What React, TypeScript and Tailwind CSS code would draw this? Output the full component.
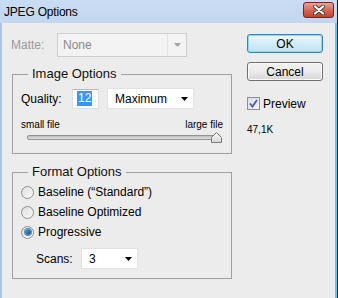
import React from "react";

function Arrow({ color = "#000" }: { color?: string }) {
  return (
    <svg width="7" height="4" viewBox="0 0 7 4">
      <path d="M0 0h7L3.5 4z" fill={color} />
    </svg>
  );
}

function Select({ value, width }: { value: string; width: string }) {
  return (
    <div
      className={`${width} h-[21px] flex items-center justify-between bg-white border border-[#e2e2e2] pl-[7px] pr-[5px] text-[12px] text-black`}
    >
      <span>{value}</span>
      <Arrow />
    </div>
  );
}

function Radio({ checked = false }: { checked?: boolean }) {
  return (
    <div className="w-[13px] h-[13px] rounded-full border border-[#8e8f8f] bg-gradient-to-br from-[#dcdcdc] to-[#fbfbfb] flex items-center justify-center">
      {checked && (
        <div className="w-[6px] h-[6px] rounded-full bg-gradient-to-br from-[#56a4d6] to-[#0c4f86] ring-1 ring-[#5c8fb4]" />
      )}
    </div>
  );
}

function Group({ title, children, className = "" }: { title: string; children: React.ReactNode; className?: string }) {
  return (
    <fieldset className={`w-[220px] border border-[#a0a0a0] pl-2 pr-2 ${className}`}>
      <legend className="ml-[7px] px-[4px] text-[13px] leading-[16px] text-[#111]">{title}</legend>
      {children}
    </fieldset>
  );
}

export default function App() {
  return (
    <div className="w-[338px] h-[298px] flex flex-col bg-[#ececec] border-r border-[#1e1e1e] font-['Liberation_Sans',Arial,sans-serif] overflow-hidden">
      {/* title bar */}
      <div className="h-[23px] flex items-center justify-between pl-[4px] pr-[3px] bg-gradient-to-b from-[#c9dcf2] to-[#c2d6ef]">
        <span className="text-[12px] text-black tracking-[-0.2px]">JPEG Options</span>
        <div className="w-[31px] h-[16px] mb-[3px] rounded-[3px] border border-[#6e2a22] bg-gradient-to-b from-[#e7a595] via-[#d2685a] to-[#c1422c] flex items-center justify-center">
          <svg width="12" height="10" viewBox="0 0 12 10">
            <path d="M2 1.5l8 7M10 1.5l-8 7" stroke="#4a3a3a" strokeWidth="4" strokeLinecap="round" />
            <path d="M2 1.5l8 7M10 1.5l-8 7" stroke="#fff" strokeWidth="2.2" strokeLinecap="round" />
          </svg>
        </div>
      </div>

      {/* client */}
      <div className="flex-1 flex border-l-2 border-[#a9c7ec]">
        <div className="flex-1 flex pl-[10px] pt-[10px] border-r-2 border-[#62c3ee]">
          {/* left column */}
          <div className="flex flex-col w-[220px]">
            <div className="flex items-center h-[24px] -ml-[1px]">
              <span className="w-[46px] text-[12px] text-[#9b9b9b]">Matte:</span>
              <div className="w-[130px] h-[24px] flex items-center border border-[#cfcfcf] bg-[#f3f3f3]">
                <span className="flex-1 pl-[5px] text-[12px] text-[#8a8a8a]">None</span>
                <div className="w-[19px] h-full border-l border-[#e2e2e2] flex items-center justify-center">
                  <Arrow color="#a4a4a4" />
                </div>
              </div>
            </div>

            <Group title="Image Options" className="mt-[9px] pb-[10px]">
              <div className="flex items-center h-[21px] mt-[6px]">
                <span className="w-[51px] text-[12px] text-black">Quality:</span>
                <div className="w-[27px] h-[20px] bg-white border border-[#dcdfe3] border-t-[#b5b8bd] flex items-center pl-[4px]">
                  <span className="bg-[#3399ff] text-white text-[12px] leading-[15px] px-[1px]">12</span>
                </div>
                <div className="ml-[8px]">
                  <Select value="Maximum" width="w-[87px]" />
                </div>
              </div>
              <div className="flex justify-between mt-[10px] text-[10px] leading-[12px] text-black">
                <span>small file</span>
                <span>large file</span>
              </div>
              <div className="relative h-[11px] mt-[1px] ml-[6px] mr-[2px]">
                <div className="absolute left-0 right-0 top-[3px] h-[5px] rounded-[2px] border border-[#939393] bg-gradient-to-b from-[#bdbdbd] to-[#e2e2e2]" />
                <svg className="absolute right-[-1px] top-0" width="11" height="11" viewBox="0 0 11 11">
                  <defs>
                    <linearGradient id="th" x1="0" y1="0" x2="0" y2="1">
                      <stop offset="0" stopColor="#fafafa" />
                      <stop offset="1" stopColor="#d6d6d6" />
                    </linearGradient>
                  </defs>
                  <path d="M0.5 10.5V5.5L5.5 0.5L10.5 5.5V10.5Z" fill="url(#th)" stroke="#7a7a7a" />
                </svg>
              </div>
            </Group>

            <Group title="Format Options" className="mt-[10px] pb-[9px]">
              <div className="flex flex-col pt-[2px] text-[12px] text-black">
                <div className="flex items-center gap-[4px] h-[20px]">
                  <Radio />
                  <span>Baseline (“Standard”)</span>
                </div>
                <div className="flex items-center gap-[4px] h-[20px]">
                  <Radio />
                  <span>Baseline Optimized</span>
                </div>
                <div className="flex items-center gap-[4px] h-[20px]">
                  <Radio checked />
                  <span>Progressive</span>
                </div>
                <div className="flex items-center mt-[6px] ml-[15px]">
                  <span className="w-[45px]">Scans:</span>
                  <Select value="3" width="w-[57px]" />
                </div>
              </div>
            </Group>
          </div>

          {/* right column */}
          <div className="flex flex-col ml-[15px] text-[12px] text-black">
            <button className="w-[76px] h-[19px] mt-[1px] rounded-[3px] border border-[#3c7fb1] bg-gradient-to-b from-[#eaf6fd] to-[#bfe3f6] shadow-[inset_0_0_0_1px_#8fd6f6]">
              OK
            </button>
            <button className="w-[76px] h-[19px] mt-[9px] rounded-[3px] border border-[#707070] bg-gradient-to-b from-[#f2f2f2] via-[#ebebeb] to-[#d6d6d6] shadow-[inset_0_0_0_1px_#fbfbfb]">
              Cancel
            </button>
            <div className="flex items-center mt-[16px] h-[13px]">
              <div className="w-[13px] h-[13px] border border-[#8f8f8f] bg-gradient-to-br from-[#d9dde4] to-[#f4f4f4] flex items-center justify-center">
                <svg width="9" height="9" viewBox="0 0 9 9">
                  <path d="M1 4.5l2.5 3L8 1" fill="none" stroke="#4b5aa8" strokeWidth="1.8" />
                </svg>
              </div>
              <span className="ml-[3px]">Preview</span>
            </div>
            <span className="mt-[14px] text-[10px] leading-[12px]">47,1K</span>
          </div>
        </div>
      </div>
    </div>
  );
}
